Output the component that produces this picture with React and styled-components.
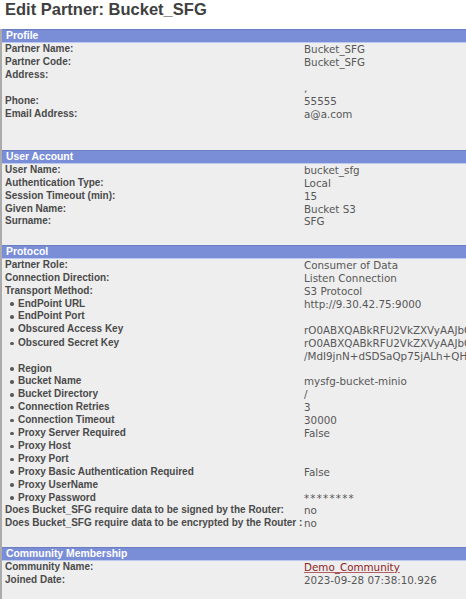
import React from "react";
import styled, { createGlobalStyle } from "styled-components";

const Global = createGlobalStyle`
  html, body {
    margin: 0;
    padding: 0;
    background: #ffffff;
    overflow: hidden;
  }
`;

const Page = styled.div`
  width: 780px;
`;

const Title = styled.h1`
  margin: 0 0 10px 5px;
  font: bold 16.5px/19px "Liberation Sans", Arial, sans-serif;
  color: #404040;
  white-space: nowrap;
`;

const Panel = styled.div`
  background: #eeeeee;
  border-left: 2px solid #ababab;
`;

const Section = styled.section`
  padding-bottom: ${(p) => p.$pad}px;
`;

const SectionHeader = styled.div`
  height: 12px;
  padding-left: 4px;
  background: #7a8ed8;
  border-top: 1px solid #6c7dc2;
  border-bottom: 1px solid #bdc8ef;
  color: #ffffff;
  font: bold 10.4px/12px "Liberation Sans", Arial, sans-serif;
  white-space: nowrap;
`;

const Rows = styled.div`
  display: grid;
  grid-template-columns: 299px 1fr;
  align-items: start;
  padding-left: 3px;
`;

const Label = styled.div`
  display: flex;
  align-items: center;
  height: 12.9px;
  font: bold 10px/12.9px "Liberation Sans", Arial, sans-serif;
  color: #4a4a4a;
  white-space: nowrap;
`;

const Bullet = styled.span`
  display: inline-block;
  width: 3.5px;
  height: 3.5px;
  border-radius: 50%;
  background: #5a5a5a;
  margin: 0 4.5px 0 5px;
  flex: none;
`;

const Value = styled.div`
  font: 10.35px/12.9px "DejaVu Sans", Verdana, sans-serif;
  color: #575757;
  white-space: nowrap;
  min-height: 12.9px;
  padding-top: ${(p) => (p.$drop ? 1 : 0)}px;
  letter-spacing: ${(p) => (p.$masked ? 1.2 : 0)}px;
`;

const Line = styled.div`
  height: ${(p) => (p.$tight ? 12.4 : 12.9)}px;
`;

const Link = styled.a`
  color: #8e2323;
  text-decoration: underline;
  text-decoration-color: #b06060;
`;

const profile = [
  { label: "Partner Name:", value: "Bucket_SFG" },
  { label: "Partner Code:", value: "Bucket_SFG" },
  { label: "Address:", value: "" },
  { label: "", value: "," },
  { label: "Phone:", value: "55555" },
  { label: "Email Address:", value: "a@a.com" },
  { label: "", value: "" },
];

const account = [
  { label: "User Name:", value: "bucket_sfg" },
  { label: "Authentication Type:", value: "Local" },
  { label: "Session Timeout (min):", value: "15" },
  { label: "Given Name:", value: "Bucket S3" },
  { label: "Surname:", value: "SFG" },
];

const protocol = [
  { label: "Partner Role:", value: "Consumer of Data" },
  { label: "Connection Direction:", value: "Listen Connection" },
  { label: "Transport Method:", value: "S3 Protocol" },
  { label: "EndPoint URL", bullet: true, value: "http://9.30.42.75:9000" },
  { label: "EndPoint Port", bullet: true, value: "" },
  {
    label: "Obscured Access Key",
    bullet: true,
    value: "rO0ABXQABkRFU2VkZXVyAAJbQnSx7Hk2LmPq",
    drop: true,
  },
  {
    label: "Obscured Secret Key",
    bullet: true,
    lines: [
      "rO0ABXQABkRFU2VkZXVyAAJbQnVw0Zc9",
      "/MdI9jnN+dSDSaQp75jALh+QHUb3kT",
    ],
  },
  { label: "Region", bullet: true, value: "" },
  { label: "Bucket Name", bullet: true, value: "mysfg-bucket-minio" },
  { label: "Bucket Directory", bullet: true, value: "/" },
  { label: "Connection Retries", bullet: true, value: "3" },
  { label: "Connection Timeout", bullet: true, value: "30000" },
  { label: "Proxy Server Required", bullet: true, value: "False" },
  { label: "Proxy Host", bullet: true, value: "" },
  { label: "Proxy Port", bullet: true, value: "" },
  { label: "Proxy Basic Authentication Required", bullet: true, value: "False" },
  { label: "Proxy UserName", bullet: true, value: "" },
  { label: "Proxy Password", bullet: true, value: "********", masked: true },
  { label: "Does Bucket_SFG require data to be signed by the Router:", value: "no" },
  { label: "Does Bucket_SFG require data to be encrypted by the Router :", value: "no" },
];

const community = [
  { label: "Community Name:", value: <Link href="#">Demo_Community</Link> },
  { label: "Joined Date:", value: "2023-09-28 07:38:10.926" },
];

function FieldRows({ items }) {
  return (
    <Rows>
      {items.map((it, i) => (
        <React.Fragment key={i}>
          <Label>
            {it.bullet && <Bullet />}
            {it.label}
          </Label>
          <Value $drop={it.drop} $masked={it.masked}>
            {it.lines
              ? it.lines.map((l, j) => (
                  <Line key={j} $tight={j === 0}>
                    {l}
                  </Line>
                ))
              : it.value}
          </Value>
        </React.Fragment>
      ))}
    </Rows>
  );
}

export default function App() {
  return (
    <Page>
      <Global />
      <Title>Edit Partner: Bucket_SFG</Title>
      <Panel>
        <Section $pad={16.5}>
          <SectionHeader>Profile</SectionHeader>
          <FieldRows items={profile} />
        </Section>
        <Section $pad={16.5}>
          <SectionHeader>User Account</SectionHeader>
          <FieldRows items={account} />
        </Section>
        <Section $pad={16.5}>
          <SectionHeader>Protocol</SectionHeader>
          <FieldRows items={protocol} />
        </Section>
        <Section $pad={40}>
          <SectionHeader>Community Membership</SectionHeader>
          <FieldRows items={community} />
        </Section>
      </Panel>
    </Page>
  );
}
